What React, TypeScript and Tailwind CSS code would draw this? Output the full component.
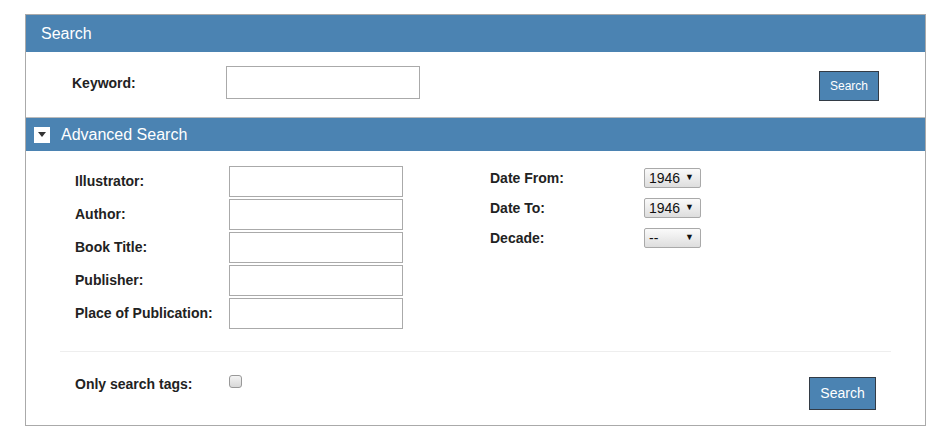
import { useState } from "react";

// Search form with collapsible advanced section
const fields = ["Illustrator:", "Author:", "Book Title:", "Publisher:", "Place of Publication:"];

const dates = [
  { label: "Date From:", value: "1946" },
  { label: "Date To:", value: "1946" },
  { label: "Decade:", value: "--" },
];

const FakeSelect = ({ value }: { value: string }) => (
  <div className="flex h-[20px] w-[57px] items-center justify-between rounded-[2px] border border-[#a9a9a9] bg-gradient-to-b from-[#fafafa] to-[#dedede] pl-[4px] pr-[6px] text-[14px] text-[#111]">
    <span>{value}</span>
    <span className="text-[9px]">▼</span>
  </div>
);

const App = () => {
  const [open, setOpen] = useState(true);

  return (
    <div className="min-h-screen bg-white pt-[14px] pl-[25px] font-['Liberation_Sans',Arial,sans-serif]">
      <div className="w-[901px] border border-[#aaa]">
        <div className="flex h-[37px] items-center bg-[#4b83b2] pl-[15px] text-[16px] text-white">
          Search
        </div>

        <div className="flex h-[65px] items-start">
          <label className="mt-[21px] w-[154px] pl-[46px] box-content text-[14px] font-bold text-[#222]">
            Keyword:
          </label>
          <input className="mt-[14px] h-[33px] w-[194px] border border-[#aaa] outline-none" />
          <button className="mt-[19px] ml-auto mr-[46px] h-[30px] w-[60px] border border-[#333b45] bg-[#4b83b2] text-[12px] text-white">
            Search
          </button>
        </div>

        <div className="flex h-[34px] items-center border-t border-[#bbb] bg-[#4b83b2] pl-[8px] text-[16px] text-white">
          <button
            onClick={() => setOpen(!open)}
            className="mr-[11px] flex h-[16px] w-[16px] items-center justify-center bg-white"
          >
            <svg width="8" height="5" viewBox="0 0 8 5">
              <path d="M0 0 L8 0 L4 5 Z" fill="#333" />
            </svg>
          </button>
          Advanced Search
        </div>

        {open && (
          <div className="pt-[15px]">
            <div className="flex">
              <div className="flex w-[415px] flex-col gap-[2px] pl-[49px] box-content">
                {fields.map((f) => (
                  <div key={f} className="flex items-center">
                    <label className="w-[154px] text-[14px] font-bold text-[#222]">{f}</label>
                    <input className="h-[31px] w-[174px] border border-[#aaa] outline-none" />
                  </div>
                ))}
              </div>
              <div className="flex flex-col gap-[10px] pt-[2px]">
                {dates.map((d) => (
                  <div key={d.label} className="flex h-[20px] items-center">
                    <label className="w-[154px] text-[14px] font-bold text-[#222]">{d.label}</label>
                    <FakeSelect value={d.value} />
                  </div>
                ))}
              </div>
            </div>

            <hr className="mx-[34px] mt-[22px] w-[831px] border-t border-[#eee]" />

            <div className="flex h-[73px] items-start">
              <label className="mt-[22px] w-[154px] pl-[49px] box-content text-[14px] font-bold text-[#222]">
                Only search tags:
              </label>
              <span className="mt-[23px] h-[13px] w-[13px] rounded-[3px] border border-[#999] bg-gradient-to-b from-[#f4f4f4] to-[#d8d8d8]" />
              <button className="mt-[25px] ml-auto mr-[49px] h-[33px] w-[67px] border border-[#333b45] bg-[#4b83b2] text-[14px] text-white">
                Search
              </button>
            </div>
          </div>
        )}
      </div>
    </div>
  );
};

export default App;
